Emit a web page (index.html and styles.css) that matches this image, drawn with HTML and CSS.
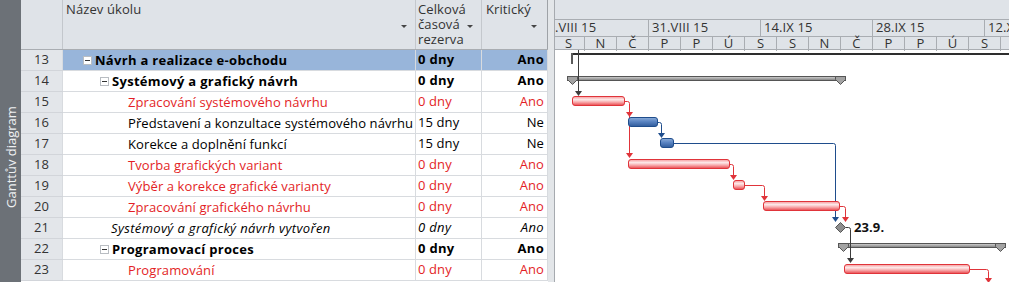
FILE: index.html
```html
<!DOCTYPE html>
<html lang="cs">
<head>
    <meta charset="UTF-8">
    <title>Ganttův diagram</title>
    <link rel="stylesheet" href="styles.css">
</head>
<body>

<div class="app">
    <div class="view-bar"><span>Ganttův diagram</span></div>

    <div class="sheet">
        <div class="head">
            <div class="cell num"></div>
            <div class="cell name"><span>Název úkolu</span><i class="drop"></i></div>
            <div class="cell slack"><span>Celková<br>časová<br>rezerva</span><i class="drop"></i></div>
            <div class="cell crit"><span>Kritický</span><i class="drop"></i></div>
        </div>

        <div class="row sel bold">
            <div class="cell num">13</div>
            <div class="cell name l1"><i class="tog"></i><span>Návrh a realizace e-obchodu</span></div>
            <div class="cell slack">0 dny</div>
            <div class="cell crit">Ano</div>
        </div>
        <div class="row bold">
            <div class="cell num">14</div>
            <div class="cell name l2"><i class="tog"></i><span>Systémový a grafický návrh</span></div>
            <div class="cell slack">0 dny</div>
            <div class="cell crit">Ano</div>
        </div>
        <div class="row red">
            <div class="cell num">15</div>
            <div class="cell name l3"><span>Zpracování systémového návrhu</span></div>
            <div class="cell slack">0 dny</div>
            <div class="cell crit">Ano</div>
        </div>
        <div class="row">
            <div class="cell num">16</div>
            <div class="cell name l3"><span>Představení a konzultace systémového návrhu</span></div>
            <div class="cell slack">15 dny</div>
            <div class="cell crit">Ne</div>
        </div>
        <div class="row">
            <div class="cell num">17</div>
            <div class="cell name l3"><span>Korekce a doplnění funkcí</span></div>
            <div class="cell slack">15 dny</div>
            <div class="cell crit">Ne</div>
        </div>
        <div class="row red">
            <div class="cell num">18</div>
            <div class="cell name l3"><span>Tvorba grafických variant</span></div>
            <div class="cell slack">0 dny</div>
            <div class="cell crit">Ano</div>
        </div>
        <div class="row red">
            <div class="cell num">19</div>
            <div class="cell name l3"><span>Výběr a korekce grafické varianty</span></div>
            <div class="cell slack">0 dny</div>
            <div class="cell crit">Ano</div>
        </div>
        <div class="row red">
            <div class="cell num">20</div>
            <div class="cell name l3"><span>Zpracování grafického návrhu</span></div>
            <div class="cell slack">0 dny</div>
            <div class="cell crit">Ano</div>
        </div>
        <div class="row milestone">
            <div class="cell num">21</div>
            <div class="cell name l2m"><span>Systémový a grafický návrh vytvořen</span></div>
            <div class="cell slack">0 dny</div>
            <div class="cell crit">Ano</div>
        </div>
        <div class="row bold">
            <div class="cell num">22</div>
            <div class="cell name l2"><i class="tog"></i><span>Programovací proces</span></div>
            <div class="cell slack">0 dny</div>
            <div class="cell crit">Ano</div>
        </div>
        <div class="row red">
            <div class="cell num">23</div>
            <div class="cell name l3"><span>Programování</span></div>
            <div class="cell slack">0 dny</div>
            <div class="cell crit">Ano</div>
        </div>
    </div>

    <div class="splitter"></div>

    <div class="chart">
        <div class="scale">
            <div class="scale-pad"></div>
            <div class="tier major">
                <div>17.VIII 15</div>
                <div>31.VIII 15</div>
                <div>14.IX 15</div>
                <div>28.IX 15</div>
                <div>12.X 15</div>
            </div>
            <div class="tier minor">
                <div>S</div><div>N</div><div>Č</div><div>P</div><div>P</div><div>Ú</div><div>S</div>
                <div>S</div><div>N</div><div>Č</div><div>P</div><div>P</div><div>Ú</div><div>S</div>
                <div>S</div>
            </div>
        </div>

        <svg class="bars" width="454" height="232" viewBox="0 0 454 232">
            <defs>
                <linearGradient id="redFill" x1="0" y1="0" x2="0" y2="1">
                    <stop offset="0" stop-color="#f59a9c"/>
                    <stop offset="0.35" stop-color="#fde9e9"/>
                    <stop offset="0.65" stop-color="#f7a4a6"/>
                    <stop offset="1" stop-color="#e8474c"/>
                </linearGradient>
                <linearGradient id="blueFill" x1="0" y1="0" x2="0" y2="1">
                    <stop offset="0" stop-color="#8cadd9"/>
                    <stop offset="0.45" stop-color="#5a84c2"/>
                    <stop offset="1" stop-color="#2f5b9b"/>
                </linearGradient>
                <linearGradient id="grayFill" x1="0" y1="0" x2="0" y2="1">
                    <stop offset="0" stop-color="#d6d6d6"/>
                    <stop offset="0.5" stop-color="#a9a9a9"/>
                    <stop offset="1" stop-color="#7c7c7c"/>
                </linearGradient>
            </defs>

            <!-- project summary -->
            <rect x="16" y="3" width="440" height="2" fill="#2e2e2e"/>
            <rect x="16" y="3" width="2" height="11" fill="#5a5a5a"/>

            <!-- summary: Systémový a grafický návrh -->
            <rect x="12.5" y="26.5" width="278" height="4" fill="url(#grayFill)" stroke="#555"/>
            <polygon points="12.5,26.5 22.5,26.5 22.5,29.5 17.5,34.5 12.5,29.5" fill="#a3a3a3" stroke="#555"/>
            <polygon points="280.5,26.5 290.5,26.5 290.5,29.5 285.5,34.5 280.5,29.5" fill="#a3a3a3" stroke="#555"/>

            <!-- summary: Programovací proces -->
            <rect x="283.5" y="193.5" width="167" height="4" fill="url(#grayFill)" stroke="#555"/>
            <polygon points="283.5,193.5 293.5,193.5 293.5,196.5 288.5,201.5 283.5,196.5" fill="#a3a3a3" stroke="#555"/>
            <polygon points="440.5,193.5 450.5,193.5 450.5,196.5 445.5,201.5 440.5,196.5" fill="#a3a3a3" stroke="#555"/>

            <!-- links -->
            <g fill="none" stroke-width="1">
                <path d="M23.5 0 V41" stroke="#3c3c3c"/>
                <path d="M70 51.5 H72.5 Q74.5 51.5 74.5 53.5 V103" stroke="#e0343a"/>
                <path d="M102 72.5 H104.5 Q106.5 72.5 106.5 74.5 V83" stroke="#1f4d8c"/>
                <path d="M118 93.5 H278.5 Q280.5 93.5 280.5 95.5 V167" stroke="#1f4d8c"/>
                <path d="M174 114.5 H176.5 Q178.5 114.5 178.5 116.5 V125" stroke="#e0343a"/>
                <path d="M189 135.5 H207.5 Q209.5 135.5 209.5 137.5 V146" stroke="#e0343a"/>
                <path d="M285 156.5 H288.5 Q290.5 156.5 290.5 158.5 V167" stroke="#e0343a"/>
                <path d="M290.5 177.5 H293.5 Q295.5 177.5 295.5 179.5 V208" stroke="#3c3c3c"/>
                <path d="M414 219.5 H431.5 Q433.5 219.5 433.5 221.5 V228" stroke="#e0343a"/>
            </g>
            <g>
                <polygon points="20,41 27,41 23.5,46" fill="#3c3c3c"/>
                <polygon points="71,62 78,62 74.5,67" fill="#e0343a"/>
                <polygon points="71,103 78,103 74.5,108" fill="#e0343a"/>
                <polygon points="103,83 110,83 106.5,88" fill="#1f4d8c"/>
                <polygon points="277,167 284,167 280.5,172" fill="#1f4d8c"/>
                <polygon points="175,125 182,125 178.5,130" fill="#e0343a"/>
                <polygon points="206,146 213,146 209.5,151" fill="#e0343a"/>
                <polygon points="287,167 294,167 290.5,172" fill="#e0343a"/>
                <polygon points="292,208 299,208 295.5,213" fill="#3c3c3c"/>
                <polygon points="430,228 437,228 433.5,233" fill="#e0343a"/>
            </g>

            <!-- task bars -->
            <g stroke="#e0343a">
                <rect x="17.5" y="46.5" width="52" height="9" rx="2.5" fill="url(#redFill)"/>
                <rect x="73.5" y="109.5" width="101" height="9" rx="2.5" fill="url(#redFill)"/>
                <rect x="178.5" y="130.5" width="11" height="9" rx="2.5" fill="url(#redFill)"/>
                <rect x="208.5" y="151.5" width="76" height="9" rx="2.5" fill="url(#redFill)"/>
                <rect x="289.5" y="214.5" width="125" height="9" rx="2.5" fill="url(#redFill)"/>
            </g>
            <g stroke="#1f4d8c">
                <rect x="73.5" y="67.5" width="29" height="9" rx="2.5" fill="url(#blueFill)"/>
                <rect x="105.5" y="88.5" width="13" height="9" rx="2.5" fill="url(#blueFill)"/>
            </g>

            <!-- milestone -->
            <polygon points="285.5,172.5 290.5,177.5 285.5,182.5 280.5,177.5" fill="#8e8e8e" stroke="#555"/>
            <text x="299" y="181.5" class="ms-label">23.9.</text>
        </svg>
    </div>
</div>

</body>
</html>
```

FILE: styles.css
```css
body {
    margin: 0;
    font-family: 'Open Sans', sans-serif;
    font-size: 13px;
    letter-spacing: 0.1px;
    color: #000;
    background: #fff;
}
.app {
    display: flex;
    height: 282px;
    overflow: hidden;
}
.view-bar {
    width: 21px;
    flex: none;
    background: #6c7177;
    display: flex;
    justify-content: center;
    padding-top: 122px;
    box-sizing: border-box;
}
.view-bar span {
    writing-mode: vertical-rl;
    transform: rotate(180deg);
    color: #eef0f2;
    font-size: 13px;
    letter-spacing: 0;
    height: 86px;
    white-space: nowrap;
}
.sheet {
    width: 527px;
    flex: none;
}
.head {
    display: flex;
    height: 50px;
    background: #dfe3e8;
    border-bottom: 1px solid #a9adb2;
    box-sizing: border-box;
    color: #333;
    line-height: 15px;
}
.head .cell {
    display: flex;
    justify-content: space-between;
    align-items: flex-start;
    padding: 2px 8px 0 3px;
    border-right: 1px solid #c4c8cd;
}
.head .slack { padding-left: 2px; }
.head .crit { padding-left: 4px; padding-right: 10px; }
.drop {
    align-self: center;
    width: 0;
    height: 0;
    border-left: 3px solid transparent;
    border-right: 3px solid transparent;
    border-top: 3px solid #454545;
    margin-top: 1px;
}
.cell {
    box-sizing: border-box;
    white-space: nowrap;
    overflow: hidden;
}
.num { width: 42px; }
.name { width: 353px; }
.slack { width: 66px; }
.crit { width: 66px; }
.head .num, .row .num {
    border-right: 1px solid #c3c7cc;
}
.head .crit, .row .crit {
    border-right: 1px solid #9ea2a7;
}
.row {
    display: flex;
    height: 21px;
    line-height: 19px;
    border-bottom: 1px solid #d8dbdf;
    box-sizing: border-box;
}
.row .cell {
    border-right: 1px solid #d8dbdf;
}
.row .num {
    background: #e3e6ea;
    color: #333;
    text-align: center;
    font-weight: 400;
    font-style: normal;
    letter-spacing: 0.1px;
    box-shadow: 0 1px 0 #d2d5da;
}
.row .name {
    display: flex;
    align-items: center;
}
.row .slack { padding-left: 2px; }
.row .crit { text-align: right; padding-right: 3px; }
.l1 { padding-left: 20px; }
.l2 { padding-left: 37px; }
.l2m { padding-left: 48px; }
.l3 { padding-left: 65px; }
.tog {
    flex: none;
    width: 9px;
    height: 9px;
    box-sizing: border-box;
    border: 1px solid #b9bdc2;
    background: linear-gradient(#333, #333) center / 5px 1px no-repeat, #fff;
    margin-right: 3px;
}
.bold {
    font-weight: 700;
    letter-spacing: 0.3px;
}
.red { color: #e31e26; }
.milestone {
    font-style: italic;
    letter-spacing: 0.35px;
}
.sel .name, .sel .slack, .sel .crit {
    background: #98b5da;
}
.splitter {
    width: 7px;
    flex: none;
    background: #e3e6e9;
    border-right: 1px solid #a6aaaf;
    box-sizing: border-box;
}
.chart {
    flex: 1;
    overflow: hidden;
}
.scale {
    height: 50px;
    background: #dfe3e8;
    border-bottom: 1px solid #a9adb2;
    box-sizing: border-box;
    color: #333;
}
.scale-pad { height: 19px; }
.tier {
    display: flex;
    border-top: 1px solid #a9adb2;
    white-space: nowrap;
}
.major {
    height: 16px;
    line-height: 15px;
    margin-left: -18px;
}
.major div {
    flex: none;
    width: 112px;
    padding-left: 3px;
    box-sizing: border-box;
    border-right: 1px solid #a9adb2;
}
.minor {
    height: 14px;
    line-height: 13px;
    margin-left: -2px;
}
.minor div {
    flex: none;
    width: 32px;
    text-align: center;
    box-sizing: border-box;
    border-right: 1px solid #a9adb2;
}
.bars {
    display: block;
}
.ms-label {
    font-family: 'Open Sans', sans-serif;
    font-size: 13px;
    font-weight: 700;
    fill: #111;
}
```
